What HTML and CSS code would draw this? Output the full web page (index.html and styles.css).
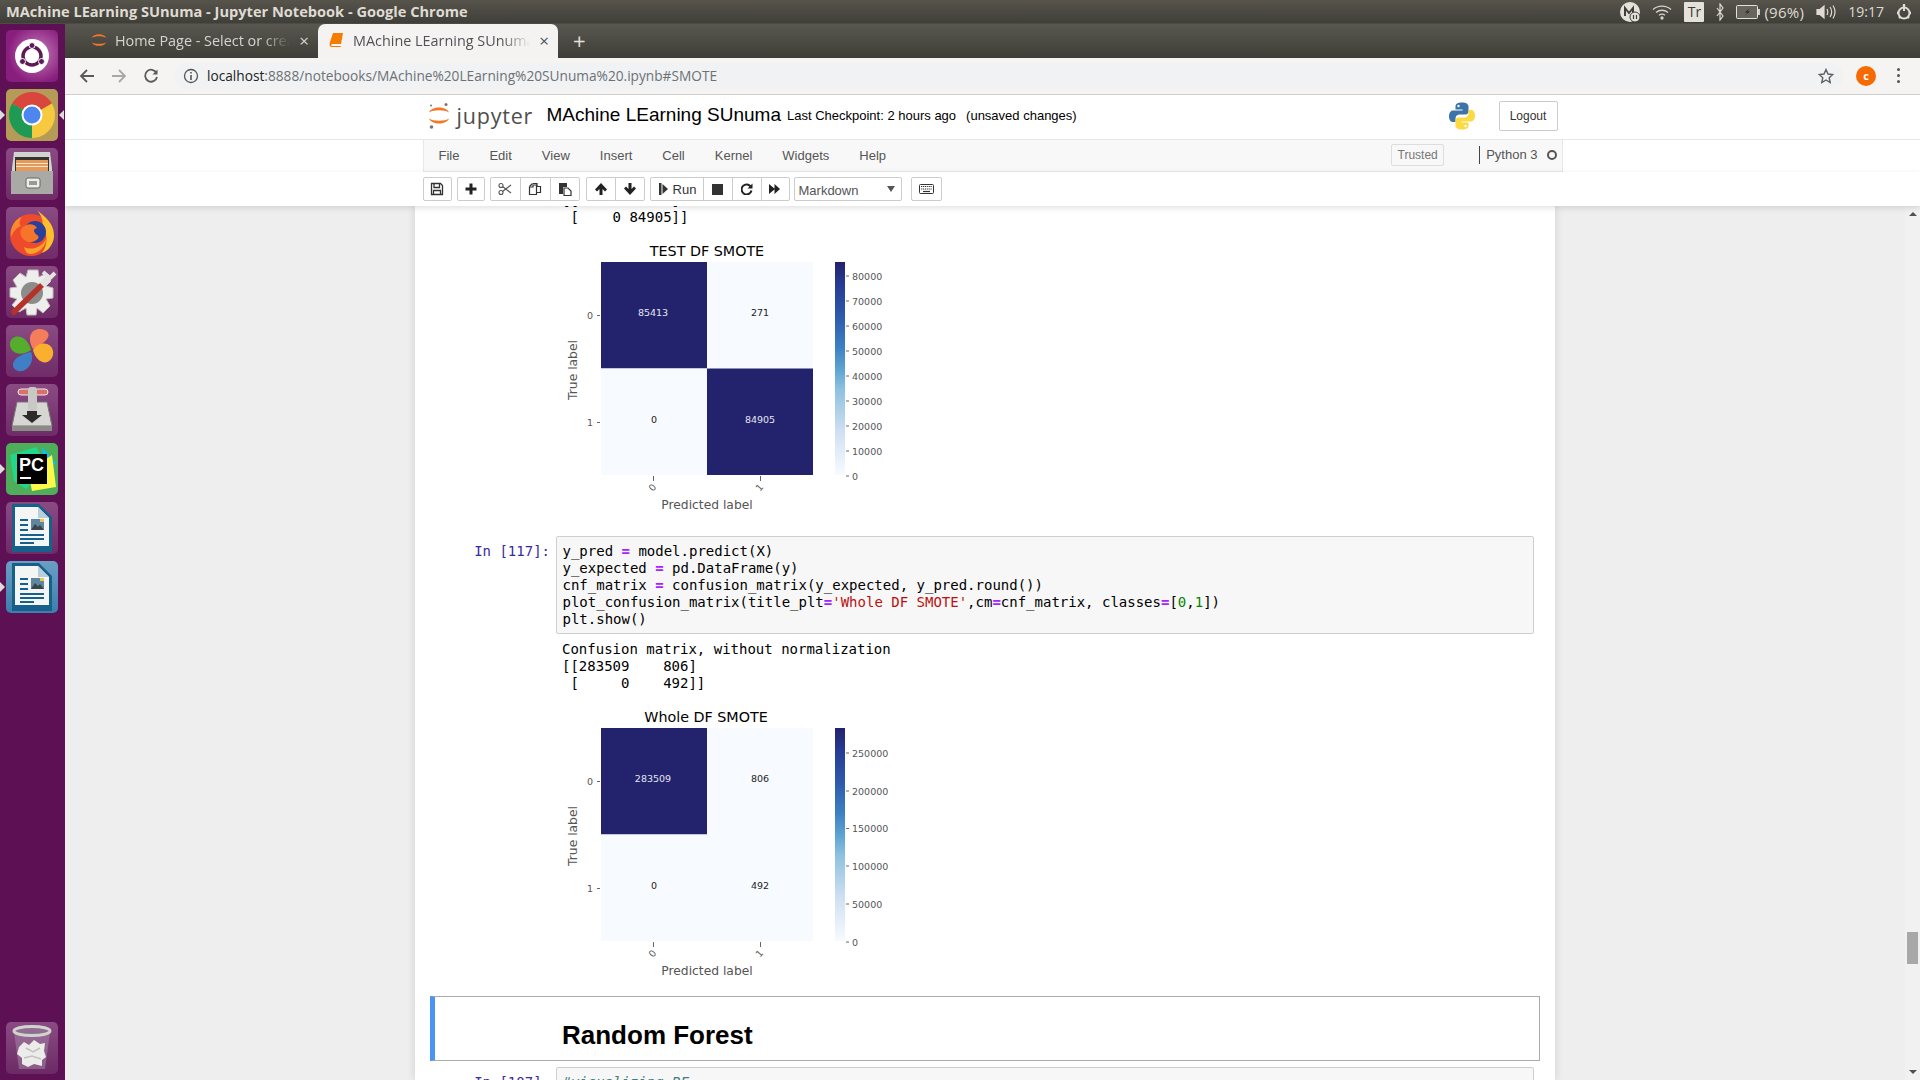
FILE: index.html
```html
<!DOCTYPE html>
<html lang="en">
<head>
    <meta charset="UTF-8">
    <title>MAchine LEarning SUnuma - Jupyter Notebook</title>
    <link rel="stylesheet" href="styles.css">
</head>
<body>
    <svg class="defs" width="0" height="0">
        <symbol id="jup-arcs" viewBox="0 0 22 27">
            <path d="M1 10.500C3.500 3.800 18.500 3.800 21 10.500C17 7.500 5 7.500 1 10.500Z" fill="#f37726"/>
            <path d="M1 16.500C3.500 23.200 18.500 23.200 21 16.500C17 19.500 5 19.500 1 16.500Z" fill="#f37726"/>
        </symbol>
        <symbol id="writer-doc" viewBox="0 0 52 52">
            <path d="M6 2H33L46 15V50H6Z" fill="#18608c"/>
            <path d="M9 5H32L43 16V44H9Z" fill="#f4f6f6"/>
            <path d="M32 5V16H43Z" fill="#b9cfdc"/>
            <path d="M14 17h8v2h-8zM14 22h8v2h-8zM14 27h8v2h-8zM14 32h24v2H14zM14 36h24v2H14zM14 40h14v2H14z" fill="#18608c"/>
            <rect x="25" y="17" width="13" height="11" fill="#5d87a1"/>
            <path d="M25 28l4-6 3 3 2-2 4 5Z" fill="#39444c"/>
            <rect x="34" y="17" width="4" height="3" fill="#e8c55c"/>
        </symbol>
    </svg>

    <div class="topbar">
        <span class="win-title">MAchine LEarning SUnuma - Jupyter Notebook - Google Chrome</span>
        <div class="tray">
            <svg class="tray-m" width="20" height="20" viewBox="0 0 20 20">
                <circle cx="10" cy="10" r="10" fill="#e4e1db"/>
                <path d="M5 14V6l4 5 4-5v5" fill="none" stroke="#3f3e39" stroke-width="2"/>
                <circle cx="15" cy="15" r="5" fill="#e4e1db" stroke="#3f3e39"/>
                <path d="M13.500 13v4M16.500 13v4" stroke="#3f3e39" stroke-width="1.200"/>
            </svg>
            <svg width="20" height="16" viewBox="0 0 20 16" fill="none" stroke="#d6d3cb" stroke-width="1.300">
                <path d="M1 5.500C6 1 14 1 19 5.500"/>
                <path d="M4 8.500C7.500 5.500 12.500 5.500 16 8.500"/>
                <path d="M7 11.200C9 9.700 11 9.700 13 11.200"/>
                <circle cx="10" cy="14" r="1" fill="#d6d3cb"/>
            </svg>
            <span class="tray-tr">Tr</span>
            <svg width="8" height="18" viewBox="0 0 8 18" fill="none" stroke="#dfdbd2" stroke-width="1.200">
                <path d="M1 5l6 8-3 4V1l3 4-6 8"/>
            </svg>
            <svg width="24" height="14" viewBox="0 0 24 14">
                <rect x="0.500" y="0.500" width="21" height="13" rx="1" fill="#66645c" stroke="#e4e1db"/>
                <rect x="22" y="4" width="2" height="6" fill="#cfccc4"/>
                <path d="M14 3L9 7.500h3L8 11l6-4.500h-3Z" fill="#1f1f1c"/>
            </svg>
            <span class="tray-text tray-batt">(96%)</span>
            <svg width="20" height="16" viewBox="0 0 20 16" fill="none" stroke="#dfdbd2" stroke-width="1.200">
                <path d="M1 5.500h3L8 2v12L4 10.500H1Z" fill="#dfdbd2"/>
                <path d="M11 5C12 7 12 9 11 11M14 3C16 6 16 10 14 13M17 1.500C19.500 5.500 19.500 10.500 17 14.500"/>
            </svg>
            <span class="tray-text">19:17</span>
            <svg width="16" height="18" viewBox="0 0 16 18" fill="none" stroke="#dfdbd2" stroke-width="2">
                <path d="M8 1v7"/>
                <circle cx="8" cy="10" r="5.500"/>
                <path d="M8 1.500v2M1 10h2M13 10h2M3 15l1.500-1.500M13 15l-1.500-1.500" stroke-width="2.500"/>
            </svg>
        </div>
    </div>

    <div class="desktop">
        <nav class="dock">
            <div class="tile tile-ubuntu">
                <svg width="52" height="52" viewBox="0 0 52 52">
                    <circle cx="26" cy="26" r="17" fill="#fff"/>
                    <circle cx="26" cy="26" r="9" fill="none" stroke="#5e1a57" stroke-width="3.500"/>
                    <circle cx="26" cy="15.500" r="3" fill="#5e1a57" stroke="#fff"/>
                    <circle cx="16.500" cy="31.500" r="3" fill="#5e1a57" stroke="#fff"/>
                    <circle cx="35.500" cy="31.500" r="3" fill="#5e1a57" stroke="#fff"/>
                </svg>
            </div>
            <div class="tile tile-chrome running both">
                <svg width="52" height="52" viewBox="0 0 52 52">
                    <path d="M26 26L6.100 14.500A23 23 0 0 1 45.900 14.500Z" fill="#d9473c"/>
                    <path d="M26 26L45.900 14.500A23 23 0 0 1 26 49Z" fill="#f7c93e"/>
                    <path d="M26 26L26 49A23 23 0 0 1 6.100 14.500Z" fill="#1e9a55"/>
                    <circle cx="26" cy="26" r="10.500" fill="#fff"/>
                    <circle cx="26" cy="26" r="8.500" fill="#4c86ee"/>
                </svg>
            </div>
            <div class="tile">
                <svg width="52" height="52" viewBox="0 0 52 52">
                    <path d="M8 4H44L46 20V46H6V20Z" fill="#d2d2ce"/>
                    <rect x="9" y="9" width="34" height="14" fill="#35322f"/>
                    <path d="M10 12h32v11H10z" fill="#e59a5c"/>
                    <path d="M10 15h32v1H10zM10 18h32v1H10z" fill="#f6e6c7"/>
                    <path d="M5 23H47V46H5Z" fill="#a9a9a5"/>
                    <rect x="20" y="30" width="14" height="10" rx="2" fill="#ededea" stroke="#666"/>
                    <rect x="23" y="33" width="8" height="4" fill="#999"/>
                </svg>
            </div>
            <div class="tile">
                <svg width="52" height="52" viewBox="0 0 52 52">
                    <circle cx="25" cy="28" r="21" fill="#ee4a2c"/>
                    <path d="M31 3C36 8 49 15 48 30C47 38 42 44 36 46C42 38 42 26 36 20C38 14 35 8 31 3Z" fill="#fdbd2c"/>
                    <path d="M5 30C4 20 9 12 16 10C13 14 13 17 15 19C10 21 7 25 5 30Z" fill="#fb8a2b"/>
                    <circle cx="29" cy="25" r="11" fill="#2b3f9a"/>
                    <path d="M15 22C20 16 28 16 31 21C27 22 27 25 31 28C36 31 28 36 22 35C16 33 13 27 15 22Z" fill="#f7742b"/>
                    <path d="M18 40C26 44 36 40 40 32C40 40 32 47 24 47C21 47 19 44 18 40Z" fill="#f9a12c"/>
                </svg>
            </div>
            <div class="tile">
                <svg width="52" height="52" viewBox="0 0 52 52">
                    <path d="M22 4H32L33 11L39 8L45 15L40 20L47 22V32L40 33L44 40L37 47L31 42L30 49H21L20 42L13 46L6 39L11 33L4 31V22L11 21L7 14L14 7L20 11Z" fill="#eeeeec" stroke="#bdbdb9"/>
                    <circle cx="26" cy="27" r="11" fill="#8c8c8a"/>
                    <path d="M8 46L36 19" stroke="#b5312a" stroke-width="5.500" stroke-linecap="round"/>
                    <path d="M36 19L42 13" stroke="#e4e4e2" stroke-width="7"/>
                    <path d="M37 6L44 12L49 7" fill="none" stroke="#e4e4e2" stroke-width="4"/>
                </svg>
            </div>
            <div class="tile">
                <svg width="52" height="52" viewBox="0 0 52 52">
                    <path d="M27 24C21 14 24 4 34 4C45 5 48 14 27 24Z" fill="#f47d5c"/>
                    <path d="M27 25C34 14 49 18 47 30C44 41 31 40 27 25Z" fill="#fbaf2e"/>
                    <path d="M25 27C29 37 21 48 12 46C3 43 5 31 25 27Z" fill="#3f7fc5"/>
                    <path d="M25 25C14 33 3 27 4 18C6 8 21 9 25 25Z" fill="#55ad2c"/>
                </svg>
            </div>
            <div class="tile">
                <svg width="52" height="52" viewBox="0 0 52 52">
                    <rect x="12" y="5" width="30" height="6" rx="3" fill="#d9706c" stroke="#eee"/>
                    <path d="M11 18H41L46 42H6Z" fill="#d6d6d2" stroke="#777"/>
                    <path d="M6 42H46V47H6Z" fill="#8b8b87"/>
                    <rect x="22" y="3" width="9" height="24" rx="3" fill="#c8c8c4"/>
                    <path d="M21 27H31V31H36L26 39L16 31H21Z" fill="#2c2c2a"/>
                </svg>
            </div>
            <div class="tile tile-pc running">
                <svg width="52" height="52" viewBox="0 0 52 52">
                    <path d="M4 12L30 4L42 24L20 46L8 38Z" fill="#21d789"/>
                    <path d="M36 4L50 20L38 30Z" fill="#07c3f2"/>
                    <path d="M22 28L46 12L50 44L26 48Z" fill="#fcf84a"/>
                    <rect x="11" y="11" width="30" height="30" fill="#000"/>
                    <text class="pc-text" x="13" y="28">PC</text>
                    <rect x="14" y="34" width="11" height="2" fill="#fff"/>
                </svg>
            </div>
            <div class="tile tile-writer">
                <svg width="52" height="52"><use href="#writer-doc"/></svg>
            </div>
            <div class="tile tile-blue running">
                <svg width="52" height="52"><use href="#writer-doc"/></svg>
            </div>
            <div class="tile tile-trash">
                <svg width="52" height="52" viewBox="0 0 52 52">
                    <path d="M8 10L13 47H39L44 10Z" fill="#a287a6" opacity=".55"/>
                    <ellipse cx="26" cy="9" rx="18" ry="4.500" fill="#8e6f90" stroke="#d2d2d0" stroke-width="3"/>
                    <path d="M13 25L18 20L23 23L28 18L34 22L39 21L38 29L40 35L36 38L36 44L28 42L22 45L16 42L16 36L11 32Z" fill="#ececea"/>
                    <path d="M20 26L27 30L34 26M18 36L26 34L35 37" fill="none" stroke="#c2c2c0" stroke-width="1.500"/>
                </svg>
            </div>
        </nav>

        <div class="window">
            <div class="tabstrip">
                <div class="tab tab-home">
                    <svg width="16" height="20"><use href="#jup-arcs"/></svg>
                    <span class="tab-title">Home Page - Select or create a notebook</span>
                    <span class="tab-close">×</span>
                </div>
                <div class="tab tab-active">
                    <svg width="16" height="16" viewBox="0 0 16 16">
                        <path d="M4 1H14L12 12H3C2 12 2 14 3 14H12L11.500 15H3C0 15 0.500 12 1 10Z" fill="#f57c00"/>
                    </svg>
                    <span class="tab-title">MAchine LEarning SUnuma - Jupyter</span>
                    <span class="tab-close">×</span>
                </div>
                <span class="tab-new">+</span>
            </div>

            <div class="chrome-bar">
                <svg class="nav-icon" width="16" height="16" viewBox="0 0 16 16" fill="none" stroke="#5a5a5a" stroke-width="1.800">
                    <path d="M15 8H2M8 2L2 8l6 6"/>
                </svg>
                <svg class="nav-icon" width="16" height="16" viewBox="0 0 16 16" fill="none" stroke="#a8a8a8" stroke-width="1.800">
                    <path d="M1 8h13M8 2l6 6-6 6"/>
                </svg>
                <svg class="nav-icon" width="16" height="16" viewBox="0 0 16 16" fill="none" stroke="#5a5a5a" stroke-width="1.800">
                    <path d="M13.500 5A6 6 0 1 0 14 9"/>
                    <path d="M14.500 1.500v5h-5Z" fill="#5a5a5a" stroke="none"/>
                </svg>
                <div class="address">
                    <svg width="16" height="16" viewBox="0 0 16 16" fill="none" stroke="#555" stroke-width="1.300">
                        <circle cx="8" cy="8" r="6.500"/>
                        <path d="M8 7v5M8 4v1.500" stroke-width="1.600"/>
                    </svg>
                    <span class="url"><b>localhost</b>:8888/notebooks/MAchine%20LEarning%20SUnuma%20.ipynb#SMOTE</span>
                    <svg class="star" width="16" height="16" viewBox="0 0 16 16" fill="none" stroke="#5a6068" stroke-width="1.400">
                        <path d="M8 1.500l2 4.500 4.800.5-3.600 3.200 1 4.800L8 12l-4.200 2.500 1-4.800L1.200 6.500 6 6Z"/>
                    </svg>
                </div>
                <span class="avatar">c</span>
                <span class="dots"><i></i><i></i><i></i></span>
            </div>

            <header class="jup-header">
                <div class="jup-inner">
                    <svg class="jup-logo" width="22" height="27" viewBox="0 0 22 27">
                        <use href="#jup-arcs"/>
                        <circle cx="18" cy="2.500" r="1.500" fill="#767677"/>
                        <circle cx="3" cy="3.500" r="1" fill="#767677"/>
                        <circle cx="3.500" cy="25" r="1.800" fill="#767677"/>
                    </svg>
                    <span class="jup-word">jupyter</span>
                    <span class="nb-name">MAchine LEarning SUnuma</span>
                    <span class="checkpoint">Last Checkpoint: 2 hours ago</span>
                    <span class="checkpoint autosave">(unsaved changes)</span>
                    <svg class="py-logo" width="28" height="28" viewBox="0 0 27 28">
                        <path d="M13.500 0.500C7.500 0.500 7 3 7 4.500V7.500H14V8.500H4.500C2 8.500 0.500 11 0.500 14.500C0.500 18 2 20 4.500 20H7V16.500C7 14 9 12.500 11 12.500H17C19 12.500 20 11 20 9.500V4.500C20 2 17.500 0.500 13.500 0.500Z" fill="#3c74a8"/>
                        <path d="M13.500 0.500C7.500 0.500 7 3 7 4.500V7.500H14V8.500H4.500C2 8.500 0.500 11 0.500 14.500C0.500 18 2 20 4.500 20H7V16.500C7 14 9 12.500 11 12.500H17C19 12.500 20 11 20 9.500V4.500C20 2 17.500 0.500 13.500 0.500Z" fill="#fbdb41" transform="rotate(180 13.500 14)"/>
                        <circle cx="10" cy="4" r="1.200" fill="#fff"/>
                        <circle cx="17" cy="24" r="1.200" fill="#fff"/>
                    </svg>
                    <button class="logout">Logout</button>
                </div>
            </header>

            <div class="menubar">
                <span class="menu-item">File</span>
                <span class="menu-item">Edit</span>
                <span class="menu-item">View</span>
                <span class="menu-item">Insert</span>
                <span class="menu-item">Cell</span>
                <span class="menu-item">Kernel</span>
                <span class="menu-item">Widgets</span>
                <span class="menu-item">Help</span>
                <span class="trusted">Trusted</span>
                <span class="kernel-name">Python 3</span>
                <span class="kernel-dot"></span>
            </div>

            <div class="toolbar-wrap">
                <div class="toolbar">
                    <div class="btn-group">
                        <button class="tb-btn w29">
                            <svg width="14" height="14" viewBox="0 0 14 14" fill="none" stroke="#333" stroke-width="1.300">
                                <path d="M1.500 1.500H10.500L12.500 3.500V12.500H1.500Z"/>
                                <path d="M4 1.500V5.500H9.500V1.500M3.500 12.500V8.500H10.500V12.500"/>
                            </svg>
                        </button>
                    </div>
                    <div class="btn-group">
                        <button class="tb-btn w28">
                            <svg width="12" height="12" viewBox="0 0 12 12"><path d="M4.500 0.500h3v4h4v3h-4v4h-3v-4h-4v-3h4Z" fill="#222"/></svg>
                        </button>
                    </div>
                    <div class="btn-group">
                        <button class="tb-btn w31">
                            <svg width="14" height="14" viewBox="0 0 14 14" fill="none" stroke="#555" stroke-width="1.100">
                                <circle cx="3" cy="3.500" r="2"/>
                                <circle cx="3" cy="10.500" r="2"/>
                                <path d="M4.500 4.500L13 11M4.500 9.500L13 3"/>
                            </svg>
                        </button>
                        <button class="tb-btn w31">
                            <svg width="14" height="14" viewBox="0 0 14 14" fill="#fff" stroke="#333" stroke-width="1.200">
                                <path d="M5 1.500H9V4.500H12.500V10.500H8"/>
                                <path d="M1.500 4.500L4.500 1.500"/>
                                <path d="M1.500 5H5V3H8.500V12.500H1.500Z"/>
                            </svg>
                        </button>
                        <button class="tb-btn w30">
                            <svg width="14" height="14" viewBox="0 0 14 14">
                                <path d="M1 1H9V5H5V12H1Z" fill="#333"/>
                                <path d="M6 6H10L13 9V13.500H6Z" fill="#fff" stroke="#333" stroke-width="1.200"/>
                            </svg>
                        </button>
                    </div>
                    <div class="btn-group arrows">
                        <button class="tb-btn w30">
                            <svg width="14" height="14" viewBox="0 0 14 14"><path d="M7 1L13 7.500 11 9.500 8.500 7V13H5.500V7L3 9.500 1 7.500Z" fill="#222"/></svg>
                        </button>
                        <button class="tb-btn w30">
                            <svg width="14" height="14" viewBox="0 0 14 14"><path d="M7 13L13 6.500 11 4.500 8.500 7V1H5.500V7L3 4.500 1 6.500Z" fill="#222"/></svg>
                        </button>
                    </div>
                    <div class="btn-group">
                        <button class="tb-btn w54">
                            <svg class="run-icon" width="9" height="12" viewBox="0 0 9 12"><path d="M0 0H2.500V12H0ZM3.500 1L9 6 3.500 11Z" fill="#333"/></svg>
                            <span>Run</span>
                        </button>
                        <button class="tb-btn w30">
                            <svg width="11" height="11" viewBox="0 0 11 11"><rect width="11" height="11" fill="#333"/></svg>
                        </button>
                        <button class="tb-btn w30">
                            <svg width="12" height="12" viewBox="0 0 12 12" fill="none" stroke="#222" stroke-width="2">
                                <path d="M10 4A5 5 0 1 0 10.500 7.500"/>
                                <path d="M11.500 0.500V5.500H6.500Z" fill="#222" stroke="none"/>
                            </svg>
                        </button>
                        <button class="tb-btn w29">
                            <svg width="12" height="12" viewBox="0 0 12 12"><path d="M0 1L6 6 0 11ZM5.500 1L11 6 5.500 11Z" fill="#222"/></svg>
                        </button>
                    </div>
                    <div class="cell-select">
                        <span>Markdown</span>
                        <i class="caret"></i>
                    </div>
                    <button class="tb-btn w31 kbd-btn">
                        <svg width="15" height="10" viewBox="0 0 15 10">
                            <rect x="0.500" y="0.500" width="14" height="9" rx="1" fill="none" stroke="#333"/>
                            <path d="M2 2.500h11M2 5h11" stroke="#333" stroke-width="1.200" stroke-dasharray="1.200 .7"/>
                            <path d="M4 7.500h7" stroke="#333" stroke-width="1.200"/>
                        </svg>
                    </button>
                </div>
            </div>

            <div class="page">
                <div class="scroll-area">
                    <main class="notebook">
                        <pre class="output-text scrolled-off">[[85413   271]
 [    0 84905]]</pre>
                        <svg class="figure" width="340" height="280" viewBox="0 0 340 280">
                            <defs>
                                <linearGradient id="cbar" x1="0" y1="1" x2="0" y2="0">
                                    <stop offset="0" stop-color="#f7fbff"/>
                                    <stop offset=".2" stop-color="#d0e0f3"/>
                                    <stop offset=".4" stop-color="#8fc1e0"/>
                                    <stop offset=".5" stop-color="#5ba3d2"/>
                                    <stop offset=".6" stop-color="#3d80c2"/>
                                    <stop offset=".75" stop-color="#2e58ac"/>
                                    <stop offset=".9" stop-color="#263a93"/>
                                    <stop offset="1" stop-color="#23226d"/>
                                </linearGradient>
                            </defs>
                            <text class="fig-title" x="147" y="21">TEST DF SMOTE</text>
                            <rect x="41" y="27" width="106" height="106.500" fill="#23226d"/>
                            <rect x="147" y="27" width="106" height="106.500" fill="#f7fbff"/>
                            <rect x="41" y="133.500" width="106" height="106.500" fill="#f7fbff"/>
                            <rect x="147" y="133.500" width="106" height="106.500" fill="#23226d"/>
                            <text class="annot light" x="93" y="81">85413</text>
                            <text class="annot" x="200" y="81">271</text>
                            <text class="annot" x="94" y="188">0</text>
                            <text class="annot light" x="200" y="188">84905</text>
                            <text class="tick-y" x="33" y="84">0</text>
                            <text class="tick-y" x="33" y="191">1</text>
                            <path class="tick-mark" d="M37 80.500h3M37 187.500h3M93.500 241v5M200.500 241v5"/>
                            <text class="tick-x" transform="translate(93 253) rotate(-50)">0</text>
                            <text class="tick-x" transform="translate(200 253) rotate(-50)">1</text>
                            <text class="axis-label" x="147" y="274">Predicted label</text>
                            <text class="axis-label" transform="translate(17 135) rotate(-90)">True label</text>
                            <rect x="275" y="27" width="10" height="213" fill="url(#cbar)"/>
                            <path class="tick-mark" d="M286 41h3M286 66h3M286 91h3M286 116h3M286 141h3M286 166h3M286 191h3M286 216h3M286 241h3"/>
                            <text class="tick-c" x="292" y="45">80000</text>
                            <text class="tick-c" x="292" y="70">70000</text>
                            <text class="tick-c" x="292" y="95">60000</text>
                            <text class="tick-c" x="292" y="120">50000</text>
                            <text class="tick-c" x="292" y="145">40000</text>
                            <text class="tick-c" x="292" y="170">30000</text>
                            <text class="tick-c" x="292" y="195">20000</text>
                            <text class="tick-c" x="292" y="220">10000</text>
                            <text class="tick-c" x="292" y="245">0</text>
                        </svg>

                        <div class="cell">
                            <div class="prompt">In [117]:</div>
                            <pre class="code">y_pred <b>=</b> model.predict(X)
y_expected <b>=</b> pd.DataFrame(y)
cnf_matrix <b>=</b> confusion_matrix(y_expected, y_pred.round())
plot_confusion_matrix(title_plt<b>=</b><span class="str">'Whole DF SMOTE'</span>,cm<b>=</b>cnf_matrix, classes<b>=</b>[<span class="num">0</span>,<span class="num">1</span>])
plt.show()</pre>
                        </div>
                        <pre class="output-text">Confusion matrix, without normalization
[[283509    806]
 [     0    492]]</pre>
                        <svg class="figure" width="340" height="280" viewBox="0 0 340 280">
                            <text class="fig-title" x="146" y="21">Whole DF SMOTE</text>
                            <rect x="41" y="27" width="106" height="106.500" fill="#23226d"/>
                            <rect x="147" y="27" width="106" height="106.500" fill="#f7fbff"/>
                            <rect x="41" y="133.500" width="106" height="106.500" fill="#f7fbff"/>
                            <rect x="147" y="133.500" width="106" height="106.500" fill="#f7fbff"/>
                            <text class="annot light" x="93" y="81">283509</text>
                            <text class="annot" x="200" y="81">806</text>
                            <text class="annot" x="94" y="188">0</text>
                            <text class="annot" x="200" y="188">492</text>
                            <text class="tick-y" x="33" y="84">0</text>
                            <text class="tick-y" x="33" y="191">1</text>
                            <path class="tick-mark" d="M37 80.500h3M37 187.500h3M93.500 241v5M200.500 241v5"/>
                            <text class="tick-x" transform="translate(93 253) rotate(-50)">0</text>
                            <text class="tick-x" transform="translate(200 253) rotate(-50)">1</text>
                            <text class="axis-label" x="147" y="274">Predicted label</text>
                            <text class="axis-label" transform="translate(17 135) rotate(-90)">True label</text>
                            <rect x="275" y="27" width="10" height="213" fill="url(#cbar)"/>
                            <path class="tick-mark" d="M286 52h3M286 90h3M286 127.500h3M286 165h3M286 203h3M286 241h3"/>
                            <text class="tick-c" x="292" y="56">250000</text>
                            <text class="tick-c" x="292" y="94">200000</text>
                            <text class="tick-c" x="292" y="131">150000</text>
                            <text class="tick-c" x="292" y="169">100000</text>
                            <text class="tick-c" x="292" y="207">50000</text>
                            <text class="tick-c" x="292" y="245">0</text>
                        </svg>

                        <div class="md-cell">
                            <h1>Random Forest</h1>
                        </div>
                        <div class="cell cell-next">
                            <div class="prompt">In [107]:</div>
                            <pre class="code"><i class="comment">#visualizing RF</i></pre>
                        </div>
                    </main>
                </div>
                <div class="scrollbar">
                    <i class="arrow-up"></i>
                    <i class="thumb"></i>
                    <i class="arrow-down"></i>
                </div>
            </div>
        </div>
    </div>
</body>
</html>
```

FILE: styles.css
```css
html, body {
    margin: 0;
    height: 100%;
    overflow: hidden;
}
body {
    display: flex;
    flex-direction: column;
    font-family: "Liberation Sans", Arial, sans-serif;
    background: #eee;
}
.defs {
    display: block;
    height: 0;
}

/* ubuntu panel */
.topbar {
    height: 24px;
    flex: none;
    display: flex;
    align-items: center;
    padding: 0 8px 0 6px;
    background: linear-gradient(#56544b, #3f3e39);
    border-bottom: 1px solid #4c4b44;
    box-sizing: border-box;
}
.win-title {
    margin-top: -1px;
    font: 700 14.600px "Open Sans", sans-serif;
    color: #dfdbd2;
}
.tray {
    margin-left: auto;
    display: flex;
    align-items: center;
    gap: 12px;
}
.tray-tr {
    width: 20px;
    height: 20px;
    background: #e4e1db;
    color: #3c3b37;
    border-radius: 1px;
    font: 14px/20px "Open Sans", sans-serif;
    text-align: center;
}
.tray-text {
    font: 14px "Open Sans", sans-serif;
    color: #dfdbd2;
}
.tray-batt {
    margin-left: -8px;
    font-size: 15px;
    letter-spacing: 0.3px;
}

/* launcher */
.desktop {
    flex: 1;
    display: flex;
    min-height: 0;
}
.dock {
    width: 65px;
    flex: none;
    box-sizing: border-box;
    display: flex;
    flex-direction: column;
    align-items: center;
    gap: 7px;
    padding: 6px 1px 6px 0;
    background: #5e1054;
}
.tile {
    position: relative;
    width: 52px;
    height: 52px;
    flex: none;
    border-radius: 5px;
    background: linear-gradient(#8a4b83, #6f2c68);
}
.tile svg {
    display: block;
}
.tile-ubuntu {
    background: radial-gradient(circle at 60% 45%, #c580bb, #8a1e7e 70%);
}
.tile-chrome {
    background: #b59b58;
}
.tile-pc {
    background: #4fae5a;
}
.tile-blue {
    background: linear-gradient(#6b9fc4, #3c7eae);
}
.tile-trash {
    margin-top: auto;
    background: linear-gradient(#8a4b83, #6b2a64);
}
.running::before,
.both::after {
    content: "";
    position: absolute;
    top: 21px;
    border: 5px solid transparent;
}
.running::before {
    left: -6px;
    border-left-color: #ddd;
}
.both::after {
    right: -6px;
    border-right-color: #ddd;
}
.pc-text {
    font: 700 18px "Liberation Sans", sans-serif;
    fill: #fff;
}

/* chrome */
.window {
    flex: 1;
    min-width: 0;
    display: flex;
    flex-direction: column;
    background: #fff;
}
.tabstrip {
    height: 34px;
    flex: none;
    display: flex;
    padding-left: 9px;
    background: linear-gradient(#595750, #3e3d37);
}
.tab {
    width: 244px;
    box-sizing: border-box;
    display: flex;
    align-items: center;
    gap: 8px;
    padding: 0 8px 2px 17px;
    color: #d5d4cf;
    font: 14.400px "Open Sans", sans-serif;
}
.tab-active {
    width: 240px;
    padding-left: 11px;
    border-radius: 7px 7px 0 0;
    background: #f4f3f1;
    color: #4f5358;
}
.tab-title {
    flex: 1;
    overflow: hidden;
    white-space: nowrap;
    -webkit-mask-image: linear-gradient(to right, #000 84%, transparent);
    mask-image: linear-gradient(to right, #000 84%, transparent);
}
.tab-close {
    width: 12px;
    font-size: 17px;
    text-align: center;
}
.tab-new {
    margin-left: 15px;
    color: #e2e1dc;
    font: 22px/32px "Open Sans", sans-serif;
}
.chrome-bar {
    height: 37px;
    flex: none;
    box-sizing: border-box;
    display: flex;
    align-items: center;
    padding: 0 0 1px 14px;
    gap: 16px;
    background: #f5f4f2;
    border-bottom: 1px solid #cfcfcd;
}
.address {
    width: 1668px;
    height: 26px;
    flex: none;
    box-sizing: border-box;
    display: flex;
    align-items: center;
    gap: 8px;
    padding: 0 9px 0 8px;
    background: #f0f2f3;
    border-radius: 13px;
}
.url {
    font: 13.700px "Open Sans", sans-serif;
    color: #6d7176;
}
.url b {
    font-weight: 400;
    color: #222;
}
.star {
    margin-left: auto;
}
.avatar {
    width: 20px;
    height: 20px;
    margin-left: -3px;
    border-radius: 50%;
    background: #f66a00;
    color: #fff;
    font: 700 11px/20px "Open Sans", sans-serif;
    text-align: center;
}
.dots {
    display: flex;
    flex-direction: column;
    gap: 3px;
    margin-left: 5px;
}
.dots i {
    width: 3px;
    height: 3px;
    border-radius: 50%;
    background: #555;
}

/* jupyter header */
.jup-header {
    height: 45px;
    flex: none;
    box-sizing: border-box;
    border-bottom: 1px solid #e7e7e7;
}
.jup-inner {
    width: 1140px;
    height: 44px;
    margin: 0 auto;
    box-sizing: border-box;
    display: flex;
    align-items: center;
    padding: 0 5px 3px;
}
.jup-logo {
    margin-top: -1px;
}
.jup-word {
    margin-left: 7px;
    width: 90px;
    font: 21.500px "Open Sans", sans-serif;
    color: #4e4e4e;
    letter-spacing: 0.8px;
}
.nb-name {
    margin: -2px 6px 0 0;
    font-size: 19px;
    color: #000;
}
.checkpoint {
    font-size: 13px;
    color: #000;
}
.autosave {
    margin-left: 10px;
}
.py-logo {
    margin-left: auto;
    margin-right: 23px;
}
.logout {
    width: 59px;
    height: 30px;
    padding: 0;
    background: #fff;
    border: 1px solid #ccc;
    border-radius: 2px;
    color: #333;
    font: 12px "Liberation Sans", sans-serif;
}

.menubar {
    width: 1140px;
    height: 32px;
    flex: none;
    margin: 0 auto;
    box-sizing: border-box;
    display: flex;
    align-items: center;
    padding-bottom: 1px;
    background: #f8f8f8;
    border: 1px solid #e7e7e7;
    border-top: 0;
    font-size: 13px;
    color: #555;
}
.menu-item {
    padding: 0 15px;
}
.trusted {
    margin-left: auto;
    width: 53px;
    height: 22px;
    box-sizing: border-box;
    border: 1px solid #ddd;
    border-radius: 2px;
    font-size: 12px;
    line-height: 20px;
    text-align: center;
    color: #777;
}
.kernel-name {
    margin-left: 35px;
    padding-left: 6px;
    border-left: 1px solid #444;
    line-height: 18px;
    font-size: 13px;
}
.kernel-dot {
    width: 10px;
    height: 10px;
    box-sizing: border-box;
    margin: 0 5px 0 9px;
    border: 2px solid #555;
    border-radius: 50%;
}

.toolbar-wrap {
    height: 34px;
    flex: none;
    position: relative;
    z-index: 2;
    background: #fff;
    box-shadow: 0 2px 6px rgba(0, 0, 0, 0.12);
}
.toolbar {
    width: 1140px;
    margin: 0 auto;
    box-sizing: border-box;
    display: flex;
    gap: 5px;
    padding-top: 5px;
}
.btn-group {
    display: flex;
}
.arrows {
    margin-left: 1px;
}
.tb-btn {
    height: 24px;
    padding: 0;
    display: flex;
    align-items: center;
    justify-content: center;
    gap: 4px;
    box-sizing: border-box;
    background: #fff;
    border: 1px solid #ccc;
    margin-left: -1px;
    font: 13px "Liberation Sans", sans-serif;
    color: #333;
}
.btn-group .tb-btn:first-child {
    margin-left: 0;
    border-radius: 2px 0 0 2px;
}
.btn-group .tb-btn:last-child {
    border-radius: 0 2px 2px 0;
}
.btn-group .tb-btn:only-child {
    border-radius: 2px;
}
.w28 { width: 28px; }
.w29 { width: 29px; }
.w30 { width: 30px; }
.w31 { width: 31px; }
.w54 { width: 54px; gap: 5px; }
.run-icon {
    margin-left: 2px;
}
.cell-select {
    width: 108px;
    height: 24px;
    margin-left: -1px;
    box-sizing: border-box;
    display: flex;
    align-items: center;
    padding: 2px 6px 0 4px;
    background: #fff;
    border: 1px solid #ccc;
    border-radius: 2px;
    font-size: 13px;
    color: #555;
}
.caret {
    margin: -3px 0 0 auto;
    border: 4px solid transparent;
    border-top: 6px solid #555;
    border-bottom: 0;
}
.kbd-btn {
    margin-left: 4px;
    border-radius: 2px;
}

/* notebook */
.page {
    flex: 1;
    min-height: 0;
    display: flex;
    background: #eee;
}
.scroll-area {
    flex: 1;
    overflow: hidden;
}
.notebook {
    width: 1140px;
    height: 100%;
    margin: 0 auto;
    box-sizing: border-box;
    padding: 0 15px;
    background: #fff;
    box-shadow: 0 0 8px rgba(87, 87, 87, 0.2);
    overflow: hidden;
}
pre {
    margin: 0;
    font: 14px/17px "DejaVu Sans Mono", monospace;
}
.output-text {
    margin: 6.500px 0 0 132px;
    color: #000;
}
.scrolled-off {
    margin-top: -14.500px;
}
.figure {
    display: block;
    margin: 9.500px 0 0 130px;
}
.figure text {
    font-family: "DejaVu Sans", sans-serif;
}
.figure .fig-title {
    font-size: 14.300px;
    text-anchor: middle;
    fill: #000;
}
.figure .annot {
    font-size: 9.500px;
    text-anchor: middle;
    fill: #222;
}
.figure .annot.light {
    fill: #e4e6f2;
}
.figure .tick-y,
.figure .tick-x,
.figure .tick-c {
    font-size: 9.500px;
    fill: #555;
}
.figure .tick-y {
    text-anchor: end;
}
.figure .tick-x {
    text-anchor: middle;
    dominant-baseline: middle;
}
.figure .axis-label {
    font-size: 12.300px;
    text-anchor: middle;
    fill: #555;
}
.tick-mark {
    stroke: #666;
    stroke-width: 1;
    fill: none;
}
.cell {
    display: flex;
    margin-top: 21px;
}
.prompt {
    width: 120px;
    flex: none;
    margin-right: 6px;
    padding-top: 7px;
    text-align: right;
    font: 14px/17px "DejaVu Sans Mono", monospace;
    color: #3a2a9f;
}
.code {
    flex: 1;
    margin-right: 6px;
    padding: 6px 5.500px 5px;
    background: #f7f7f7;
    border: 1px solid #cfcfcf;
    border-radius: 2px;
    color: #000;
}
.code b {
    color: #a2f;
}
.str {
    color: #b11;
}
.num {
    color: #080;
}
.comment {
    color: #408080;
}
.md-cell {
    height: 65px;
    margin: 15px 0 0;
    box-sizing: border-box;
    padding: 23px 0 0 127px;
    border: 1px solid #ababab;
    border-left: 5px solid #4b93f5;
}
.md-cell h1 {
    margin: 0;
    font-size: 26px;
    line-height: 30px;
    color: #000;
}
.cell-next {
    margin-top: 6px;
}

.scrollbar {
    width: 15px;
    flex: none;
    box-sizing: border-box;
    display: flex;
    flex-direction: column;
    align-items: center;
    padding: 6px 0;
    background: #f1f1f1;
}
.arrow-up,
.arrow-down {
    border: 4px solid transparent;
    border-top: 0;
    border-bottom: 4px solid #505050;
}
.arrow-down {
    margin-top: auto;
    border-bottom: 0;
    border-top: 4px solid #505050;
}
.thumb {
    width: 11px;
    height: 32px;
    margin-top: 716px;
    background: #a8a8a8;
}
```
